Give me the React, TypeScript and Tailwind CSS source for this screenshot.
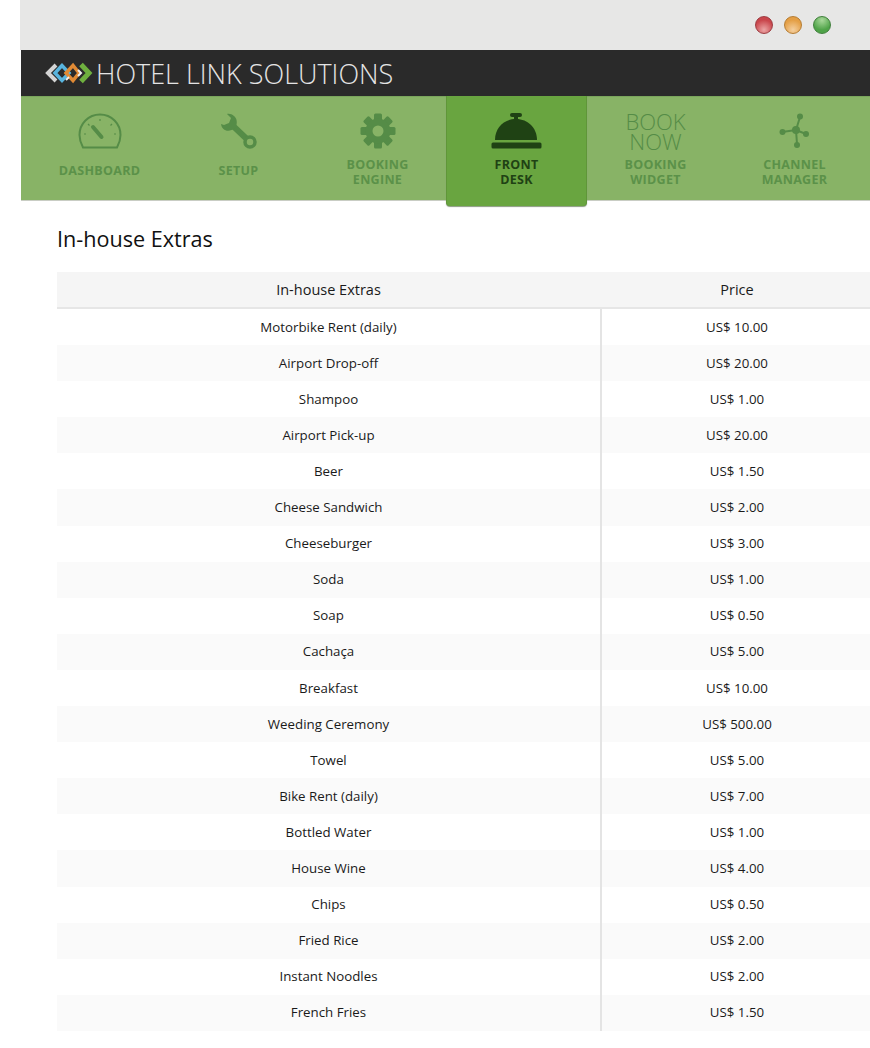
import React from 'react';

const extras: [string, string][] = [
  ['Motorbike Rent (daily)', 'US$ 10.00'],
  ['Airport Drop-off', 'US$ 20.00'],
  ['Shampoo', 'US$ 1.00'],
  ['Airport Pick-up', 'US$ 20.00'],
  ['Beer', 'US$ 1.50'],
  ['Cheese Sandwich', 'US$ 2.00'],
  ['Cheeseburger', 'US$ 3.00'],
  ['Soda', 'US$ 1.00'],
  ['Soap', 'US$ 0.50'],
  ['Cachaça', 'US$ 5.00'],
  ['Breakfast', 'US$ 10.00'],
  ['Weeding Ceremony', 'US$ 500.00'],
  ['Towel', 'US$ 5.00'],
  ['Bike Rent (daily)', 'US$ 7.00'],
  ['Bottled Water', 'US$ 1.00'],
  ['House Wine', 'US$ 4.00'],
  ['Chips', 'US$ 0.50'],
  ['Fried Rice', 'US$ 2.00'],
  ['Instant Noodles', 'US$ 2.00'],
  ['French Fries', 'US$ 1.50'],
];

const Logo = () => (
  <svg width="48" height="22" viewBox="0 0 48 22" fill="none" strokeWidth="3.5">
    <path d="M11 3 L3 11 L11 19" stroke="#d4d4d4" strokeWidth="4" />
    <path d="M17 3.500 L10 11 L17 18.500 L24 11 Z" stroke="#58b4de" />
    <path d="M28 3.500 L21 11 L28 18.500 L34 11 Z" stroke="#e08a35" />
    <path d="M24 15 L21 18" stroke="#f1f1f1" strokeWidth="2" />
    <path d="M33 8 L36 11 L33 14" stroke="#f1f1f1" strokeWidth="2" />
    <path d="M36 2.500 L44 11 L36 19.500" stroke="#6fb03f" strokeWidth="5" />
  </svg>
);

const Gauge = () => (
  <svg width="44" height="36" viewBox="0 0 44 36" fill="none" stroke="#558c47">
    <path d="M5 34.500 C2.500 30 1.500 26 1.500 22 C1.500 10.500 10.500 1.500 22 1.500 C33.500 1.500 42.500 10.500 42.500 22 C42.500 26 41.500 30 39 34.500 Z" strokeWidth="2" />
    <path d="M15 14 L23.500 24" strokeWidth="4" strokeLinecap="round" />
    <path d="M22 6 V8 M10 11 L11.500 12.500 M34 11 L32.500 12.500 M6 21 H8 M36 21 H38" strokeWidth="1.200" />
  </svg>
);

const Wrench = () => (
  <svg width="38" height="38" viewBox="0 0 38 38" fill="none">
    <path d="M11 11 L30 29" stroke="#558c47" strokeWidth="6" />
    <path d="M1 11 C2 18 9 20 15 15 C18 11 17 5 14 3 C12 1 9 0.500 7 1 L11 5 L9 10 L4 12 Z" fill="#558c47" />
    <circle cx="30" cy="29" r="5" fill="#88b366" stroke="#558c47" strokeWidth="3.500" />
  </svg>
);

const Gear = () => (
  <svg width="36" height="36" viewBox="0 0 36 36">
    <g fill="#558c47">
      {[0, 45, 90, 135, 180, 225, 270, 315].map((a) => (
        <rect key={a} x="14" y="0.500" width="8" height="8" rx="1.500" transform={`rotate(${a} 18 18)`} />
      ))}
    </g>
    <circle cx="18" cy="18" r="9" fill="none" stroke="#558c47" strokeWidth="7" />
  </svg>
);

const Bell = () => (
  <svg width="52" height="36" viewBox="0 0 52 36" fill="#1f4214">
    <rect x="19" y="0" width="12" height="4" rx="2" />
    <rect x="23" y="3" width="4" height="4" />
    <path d="M4 27 C4 15 13 6 25 6 C37 6 46 15 46 27 Z" />
    <rect x="0.500" y="29.500" width="50" height="6" rx="1.500" />
  </svg>
);

const Channel = () => (
  <svg width="32" height="36" viewBox="0 0 32 36" fill="none" stroke="#558c47" strokeWidth="2">
    <path d="M3 19 L17 17 L27 21 M17 17 L21 4 M17 17 L18 31" />
    <g fill="#558c47" stroke="none">
      <circle cx="17" cy="17" r="4" />
      <circle cx="3.500" cy="19" r="3" />
      <circle cx="27" cy="21" r="3" />
      <circle cx="21" cy="3.500" r="3" />
      <circle cx="18" cy="32" r="3" />
    </g>
  </svg>
);

const tabs = [
  { icon: <Gauge />, label: ['DASHBOARD'] },
  { icon: <Wrench />, label: ['SETUP'] },
  { icon: <Gear />, label: ['BOOKING', 'ENGINE'] },
  { icon: <Bell />, label: ['FRONT', 'DESK'], active: true },
  {
    icon: (
      <div className="text-center text-[22px] leading-[20px] font-light text-[#558c47] -mt-[2px]">
        BOOK
        <br />
        NOW
      </div>
    ),
    label: ['BOOKING', 'WIDGET'],
  },
  { icon: <Channel />, label: ['CHANNEL', 'MANAGER'] },
];

export default function App() {
  return (
    <div className="w-[870px] h-[1048px] overflow-hidden bg-white font-['Open_Sans',sans-serif]">
      <div className="ml-5 h-[50px] bg-[#e7e7e6] flex justify-end items-center gap-[11px] pr-[39px]">
        <span className="w-[18px] h-[18px] rounded-full border border-[#9c3b40] bg-[radial-gradient(circle_at_50%_80%,#eba5a5,#c9464c_65%)]" />
        <span className="w-[18px] h-[18px] rounded-full border border-[#b57c32] bg-[radial-gradient(circle_at_50%_80%,#f4cf9f,#e49f45_65%)]" />
        <span className="w-[18px] h-[18px] rounded-full border border-[#3f7f3a] bg-[radial-gradient(circle_at_50%_20%,#a9d89a,#4fa348_65%)]" />
      </div>

      <div className="ml-[21px] h-[46px] bg-[#2a2a2a] flex items-center pl-[24px] gap-[3px]">
        <Logo />
        <span className="text-[27px] text-[#e4e4e4] font-light leading-none whitespace-nowrap">HOTEL LINK SOLUTIONS</span>
      </div>

      <div className="ml-[21px] h-[105px] bg-[#88b366] border-t border-[#7aa55c] border-b border-b-[#c9cdc4] flex pl-[9px]">
        {tabs.map((tab) => (
          <div
            key={tab.label[0] + tab.label.length}
            className={
              tab.active
                ? 'w-[141px] -mx-px h-[110px] -mt-px pt-px shrink-0 flex flex-col items-center bg-[#69a540] rounded-b-[4px] border-x border-[#5f9638] shadow-[0_1px_1px_#8a9a80] font-bold text-[#1f4214]'
                : 'w-[139px] shrink-0 flex flex-col items-center font-bold text-[#5b9149]'
            }
          >
            <div className="h-[56px] pt-[16px] flex justify-center">{tab.icon}</div>
            <div
              className={`h-[38px] flex flex-col justify-center text-[12.500px] leading-[15px] text-center tracking-[0.3px] ${
                tab.label.length === 1 ? '-mt-[2px]' : ''
              }`}
            >
              {tab.label.map((l) => (
                <div key={l}>{l}</div>
              ))}
            </div>
          </div>
        ))}
      </div>

      <h1 className="ml-[57px] mt-[20px] text-[21.600px] leading-[36px] text-[#111]">In-house Extras</h1>

      <div className="ml-[57px] mt-[15px] w-[815px] text-[#1a1a1a]">
        <div className="grid grid-cols-[543px_272px] h-[37px] bg-[#f5f5f5] border-b-2 border-[#e6e6e6] text-[14.500px] items-center text-center">
          <div>In-house Extras</div>
          <div className="pl-[2px]">Price</div>
        </div>
        {extras.map(([name, price], i) => (
          <div
            key={name}
            className={`grid grid-cols-[543px_272px] h-[36.1px] text-[13.300px] items-center text-center ${i % 2 === 1 ? 'bg-[#fafafa]' : 'bg-white'}`}
          >
            <div className="pt-px">{name}</div>
            <div className="h-full pt-px flex items-center justify-center border-l-2 border-[#e4e4e4]">{price}</div>
          </div>
        ))}
      </div>
    </div>
  );
}
